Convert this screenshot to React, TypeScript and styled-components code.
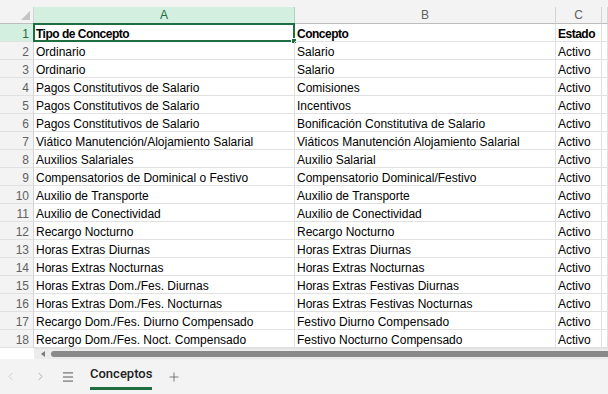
import styled, { createGlobalStyle } from 'styled-components';
import { ChevronLeft, ChevronRight, Menu, Plus } from 'lucide-react';

const GlobalStyle = createGlobalStyle`
  html, body {
    margin: 0;
    padding: 0;
    background: #ffffff;
  }
  * {
    box-sizing: border-box;
  }
`;

const rows: [string, string, string][] = [
  ['Ordinario', 'Salario', 'Activo'],
  ['Ordinario', 'Salario', 'Activo'],
  ['Pagos Constitutivos de Salario', 'Comisiones', 'Activo'],
  ['Pagos Constitutivos de Salario', 'Incentivos', 'Activo'],
  ['Pagos Constitutivos de Salario', 'Bonificación Constitutiva de Salario', 'Activo'],
  ['Viático Manutención/Alojamiento Salarial', 'Viáticos Manutención Alojamiento Salarial', 'Activo'],
  ['Auxilios Salariales', 'Auxilio Salarial', 'Activo'],
  ['Compensatorios de Dominical o Festivo', 'Compensatorio Dominical/Festivo', 'Activo'],
  ['Auxilio de Transporte', 'Auxilio de Transporte', 'Activo'],
  ['Auxilio de Conectividad', 'Auxilio de Conectividad', 'Activo'],
  ['Recargo Nocturno', 'Recargo Nocturno', 'Activo'],
  ['Horas Extras Diurnas', 'Horas Extras Diurnas', 'Activo'],
  ['Horas Extras Nocturnas', 'Horas Extras Nocturnas', 'Activo'],
  ['Horas Extras Dom./Fes. Diurnas', 'Horas Extras Festivas Diurnas', 'Activo'],
  ['Horas Extras Dom./Fes. Nocturnas', 'Horas Extras Festivas Nocturnas', 'Activo'],
  ['Recargo Dom./Fes. Diurno Compensado', 'Festivo Diurno Compensado', 'Activo'],
  ['Recargo Dom./Fes. Noct. Compensado', 'Festivo Nocturno Compensado', 'Activo'],
];

const Page = styled.div`
  width: 608px;
  height: 394px;
  overflow: hidden;
  display: flex;
  flex-direction: column;
  background: #ffffff;
  font-family: 'Liberation Sans', Arial, sans-serif;
`;

const TopStrip = styled.div`
  height: 7px;
  background: #f3f3f3;
`;

const Grid = styled.div`
  display: grid;
  grid-template-columns: 34px 261px 261px 46px 1fr;
  grid-auto-rows: 18px;
  grid-template-rows: 17px;
`;

const Corner = styled.div`
  position: relative;
  background: #f3f3f3;
  border-right: 1px solid #d4d4d4;
  border-bottom: 1px solid #bdbdbd;

  &::after {
    content: '';
    position: absolute;
    right: 3px;
    bottom: 3px;
    width: 0;
    height: 0;
    border-left: 9px solid transparent;
    border-bottom: 9px solid #c4c4c4;
  }
`;

const ColHeader = styled.div<{ $active?: boolean }>`
  display: flex;
  align-items: center;
  justify-content: center;
  font-size: 12px;
  color: ${(p) => (p.$active ? '#1e6e42' : '#616161')};
  background: ${(p) => (p.$active ? '#d3efdf' : '#f3f3f3')};
  border-right: 1px solid ${(p) => (p.$active ? '#a9d8bd' : '#d4d4d4')};
  border-bottom: 1px solid ${(p) => (p.$active ? '#1e6e42' : '#bdbdbd')};
`;

const RowHeader = styled.div<{ $active?: boolean }>`
  display: flex;
  align-items: center;
  justify-content: flex-end;
  padding: 2px 4px 0 0;
  font-size: 12px;
  color: ${(p) => (p.$active ? '#1e6e42' : '#616161')};
  background: ${(p) => (p.$active ? '#d3efdf' : '#f3f3f3')};
  border-right: 1px solid ${(p) => (p.$active ? '#1e6e42' : '#d4d4d4')};
  border-bottom: 1px solid #e1e1e1;
`;

const Cell = styled.div<{ $bold?: boolean; $selected?: boolean }>`
  position: relative;
  display: flex;
  align-items: center;
  padding: 2px 0 0 2px;
  font-size: 12px;
  color: #000000;
  white-space: nowrap;
  overflow: ${(p) => (p.$selected ? 'visible' : 'hidden')};
  font-weight: ${(p) => (p.$bold ? 700 : 400)};
  letter-spacing: ${(p) => (p.$bold ? '-0.5px' : '0')};
  border-right: 1px solid #e1e1e1;
  border-bottom: 1px solid #e1e1e1;
`;

const Selection = styled.div`
  position: absolute;
  left: -1px;
  top: -1px;
  right: -1px;
  bottom: -1px;
  border: 2px solid #1e6e42;
  pointer-events: none;
`;

const Handle = styled.div`
  position: absolute;
  right: -4px;
  bottom: -4px;
  width: 6px;
  height: 6px;
  background: #1e6e42;
  border: 1px solid #ffffff;
`;

const ScrollRow = styled.div`
  display: flex;
  height: 11px;
`;

const ScrollGutter = styled.div`
  width: 34px;
  background: #ffffff;
`;

const ScrollTrack = styled.div`
  flex: 1;
  display: flex;
  align-items: center;
  gap: 6px;
  padding-left: 7px;
  background: #ececec;
  border-top: 1px solid #e2e2e2;
`;

const ArrowLeft = styled.div`
  width: 0;
  height: 0;
  border-top: 3px solid transparent;
  border-bottom: 3px solid transparent;
  border-right: 4px solid #7a7a7a;
`;

const Thumb = styled.div`
  flex: 1;
  height: 6px;
  border-radius: 3px 0 0 3px;
  background: #8a8a8a;
`;

const TabBar = styled.div`
  flex: 1;
  display: flex;
  align-items: stretch;
  background: #f3f3f3;
`;

const NavButton = styled.div<{ $color: string; $width: number }>`
  width: ${(p) => p.$width}px;
  display: flex;
  align-items: center;
  justify-content: center;
  color: ${(p) => p.$color};
`;

const SheetTab = styled.div`
  display: flex;
  align-items: center;
  margin: 0 10px 0 14px;
  padding-top: 1px;
  font-family: Roboto, 'Liberation Sans', sans-serif;
  font-weight: 500;
  font-size: 13px;
  color: #222222;
  border-bottom: 3px solid #1e6e42;
  height: 31px;
`;

export default function App() {
  return (
    <Page>
      <GlobalStyle />
      <TopStrip />
      <Grid>
        <Corner />
        <ColHeader $active>A</ColHeader>
        <ColHeader>B</ColHeader>
        <ColHeader>C</ColHeader>
        <ColHeader />

        <RowHeader $active>1</RowHeader>
        <Cell $bold $selected>
          Tipo de Concepto
          <Selection>
            <Handle />
          </Selection>
        </Cell>
        <Cell $bold>Concepto</Cell>
        <Cell $bold>Estado</Cell>
        <Cell />

        {rows.map((r, i) => (
          <Row key={i} n={i + 2} values={r} />
        ))}
      </Grid>
      <ScrollRow>
        <ScrollGutter />
        <ScrollTrack>
          <ArrowLeft />
          <Thumb />
        </ScrollTrack>
      </ScrollRow>
      <TabBar>
        <NavButton $color="#c2c2c2" $width={20}>
          <ChevronLeft size={13} strokeWidth={1.4} />
        </NavButton>
        <NavButton $color="#9a9a9a" $width={40}>
          <ChevronRight size={13} strokeWidth={1.4} />
        </NavButton>
        <NavButton $color="#444444" $width={16}>
          <Menu size={14} strokeWidth={1.5} />
        </NavButton>
        <SheetTab>Conceptos</SheetTab>
        <NavButton $color="#6a6a6a" $width={24}>
          <Plus size={14} strokeWidth={1.5} />
        </NavButton>
      </TabBar>
    </Page>
  );
}

function Row({ n, values }: { n: number; values: [string, string, string] }) {
  return (
    <>
      <RowHeader>{n}</RowHeader>
      <Cell>{values[0]}</Cell>
      <Cell>{values[1]}</Cell>
      <Cell>{values[2]}</Cell>
      <Cell />
    </>
  );
}
